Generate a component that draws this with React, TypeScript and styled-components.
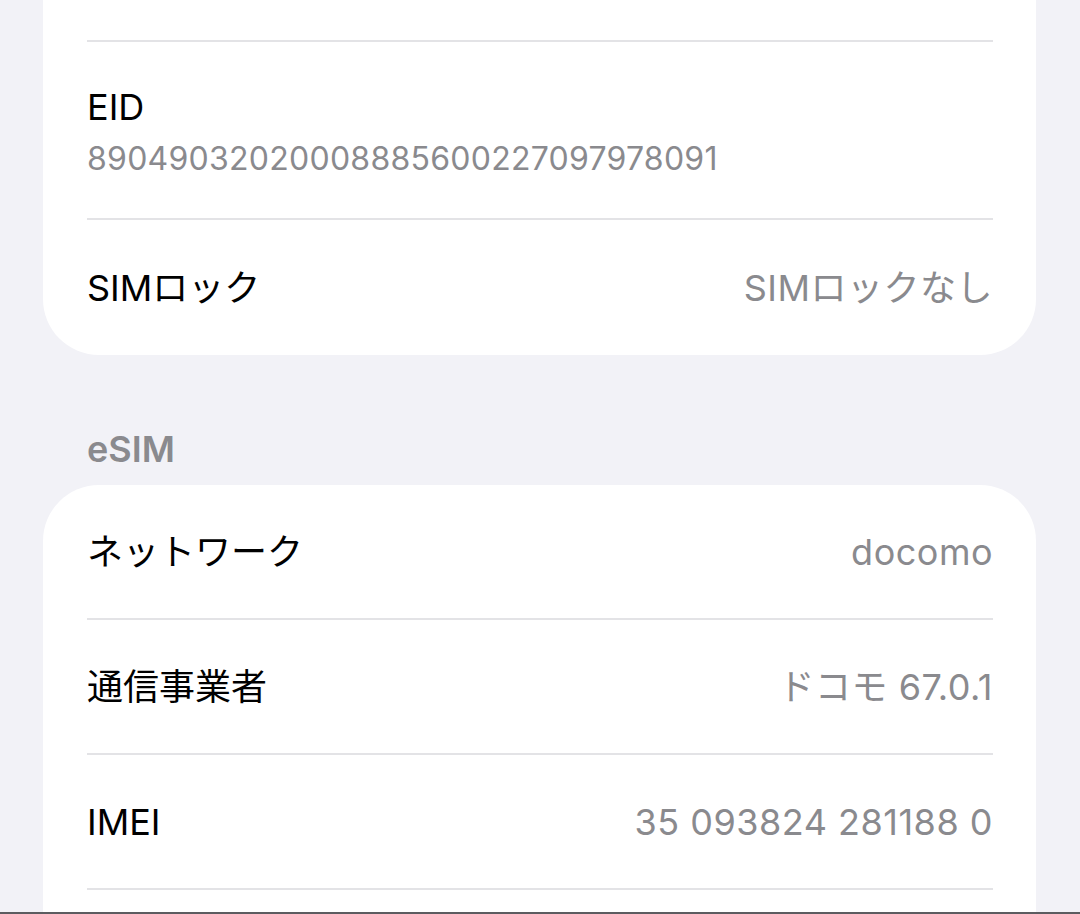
import * as React from 'react'
import styled, { createGlobalStyle } from 'styled-components'

type Item = {
  label: string
  value?: string
}

const esimItems: Item[] = [
  { label: 'ネットワーク', value: 'docomo' },
  { label: '通信事業者', value: 'ドコモ 67.0.1' },
  { label: 'IMEI', value: '35 093824 281188 0' },
  { label: '' },
]

export default function App() {
  return (
    <>
      <GlobalStyle />
      <Screen>
        <Card $offset={-92}>
          <Row $height={134} />
          <StackRow>
            <Label>EID</Label>
            <SubValue>89049032020008885600227097978091</SubValue>
          </StackRow>
          <Row $height={135}>
            <Label>SIMロック</Label>
            <Value>SIMロックなし</Value>
          </Row>
        </Card>

        <SectionHeader>eSIM</SectionHeader>

        <Card>
          {esimItems.map((item, i) => (
            <Row key={i} $height={135}>
              <Label>{item.label}</Label>
              {item.value && <Value>{item.value}</Value>}
            </Row>
          ))}
        </Card>
      </Screen>
    </>
  )
}

const GlobalStyle = createGlobalStyle`
  html, body {
    margin: 0;
    padding: 0;
    background: #f2f2f7;
  }
  body {
    font-family: "Inter", "Noto Sans CJK JP", sans-serif;
    -webkit-font-smoothing: antialiased;
  }
`

const Screen = styled.div`
  box-sizing: border-box;
  height: 914px;
  overflow: hidden;
  background: #f2f2f7;
  padding: 0 44px 0 43px;
  border-bottom: 2px solid #5c5c60;
`

const Card = styled.div<{ $offset?: number }>`
  background: #ffffff;
  border-radius: 56px;
  margin-top: ${p => p.$offset ?? 0}px;
  padding: 0 43px 0 44px;
`

const Row = styled.div<{ $height: number }>`
  box-sizing: border-box;
  height: ${p => p.$height}px;
  display: flex;
  align-items: center;
  justify-content: space-between;
  border-bottom: 2px solid #e3e3e6;

  &:last-child {
    border-bottom: none;
  }
`

const StackRow = styled.div`
  box-sizing: border-box;
  height: 178px;
  display: flex;
  flex-direction: column;
  gap: 18px;
  padding-top: 47px;
  border-bottom: 2px solid #e3e3e6;
`

const Label = styled.div`
  font-size: 36px;
  line-height: 1;
  color: #000000;
  white-space: nowrap;
`

const Value = styled.div`
  font-size: 36px;
  line-height: 1;
  letter-spacing: 0.5px;
  color: #8a8a8e;
  white-space: nowrap;
`

const SubValue = styled.div`
  font-size: 32px;
  line-height: 1;
  letter-spacing: 0.25px;
  color: #8a8a8e;
  white-space: nowrap;
`

const SectionHeader = styled.div`
  box-sizing: border-box;
  height: 130px;
  display: flex;
  align-items: flex-end;
  padding: 0 0 18px 44px;
  font-size: 36px;
  line-height: 1;
  font-weight: 600;
  color: #8a8a8e;
`
